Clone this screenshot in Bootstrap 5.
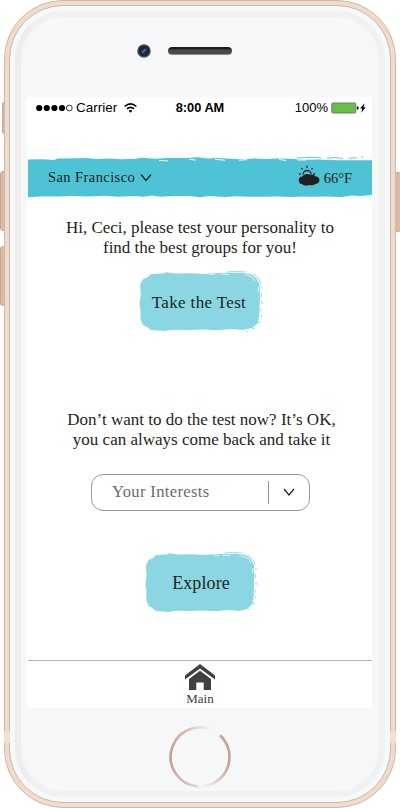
<!DOCTYPE html>
<html lang="en">
<head>
<meta charset="utf-8">
<meta name="viewport" content="width=device-width, initial-scale=1">
<title>Personality groups</title>
<link href="https://cdn.jsdelivr.net/npm/bootstrap@5.3.0/dist/css/bootstrap.min.css" rel="stylesheet">
<style>
body{width:400px;height:808px;overflow:hidden;background:#fff;color:#231f20;font-family:"Liberation Serif",serif}
svg{display:block;flex:none}
.phone{width:392px;height:808px;margin:0 4px;border:1px solid #cdb8ab;border-radius:59px;background:#f1dccb;padding:4px}
.rim{border:1px solid #cdb6a7;border-radius:54px;background:#f6f9fb;padding:5px}
.bezel{border:6px solid #f1f1ef;border-left-color:#efecec;border-radius:48px;background:#f5f7f9;padding:0 6px}
.top-face{height:80px}
.side-key{position:absolute;background:#d8bba9;border:1px solid #c3a797;z-index:-1}
.key-mute{left:2px;top:102px;width:4px;height:32px;border-radius:2px}
.key-up{left:0;top:171px;width:6px;height:60px;border-radius:3px}
.key-down{left:0;top:246px;width:6px;height:60px;border-radius:3px}
.key-power{left:394px;top:172px;width:7px;height:60px;border-radius:3px}
.seam{position:absolute;top:731px;width:6px;height:12px;background:#f3dfcf}
.seam-l{left:4px}.seam-r{left:390px}
.camera{margin:27px 0 0 110px}
.speaker{width:64px;height:8px;margin:30px 0 0 17px;border-radius:4px;background:linear-gradient(#1c1d1e 25%,#48494a 40%);border-bottom:1px solid #8d8e8f}
.display{width:345px;height:611px;background:#fff}
.status{height:22px;padding:0 5px 0 9px;color:#000;font-family:"Liberation Sans",sans-serif;line-height:22px}
.status-l,.status-r{width:130px}
.status-l{margin-right:-3px}
.carrier{font-size:13.5px;margin-left:3px}
.clock{font-size:12.8px;font-weight:700}
.charge{font-size:13px}
.place{position:relative;z-index:0;height:44px;margin-top:35px;padding:0 20px 0 21px}
.brush{position:absolute;left:0;top:0;z-index:-1}
.band{top:1px}
.city{font-size:14.5px;letter-spacing:.42px;line-height:20px;margin-top:1px}
.temp{font-size:14.5px;line-height:20px;margin-top:4px}
.copy{font-size:17px;line-height:20px;white-space:nowrap}
.intro{margin-top:20px;padding-left:1px}
.later{margin-top:77px;padding-left:4px}
.paint-btn,.paint-btn:hover{position:relative;z-index:0;border:0;padding:0;font-size:17px;color:#231f20}
.take{width:124px;height:62px;margin:13px 0 0 112px;padding:1px 4px 0 0;letter-spacing:.35px}
.explore{width:112px;height:62px;margin:41px 0 0 118px;padding:0;font-size:18px;letter-spacing:.1px}
.interest{width:219px;height:37px;margin:24px 0 0 64px;border:1px solid #989899;border-radius:12px;padding:0 14px 0 20px}
.interest-label{font-size:16.5px;letter-spacing:.38px;color:#6c6c6d}
.divider{width:1px;height:23px;background:#929292}
.tabs{height:48px;margin-left:1px;border-top:1px solid #b4b4b4;padding-top:3px;color:#414143}
.tab-text{font-size:13px;line-height:14px;margin-top:2px}
.home{padding-top:17px}
</style>
<script src="https://cdn.jsdelivr.net/npm/bootstrap@5.3.0/dist/js/bootstrap.bundle.min.js"></script>
</head>
<body class="position-relative">
<span class="side-key key-mute"></span><span class="side-key key-up"></span><span class="side-key key-down"></span><span class="side-key key-power"></span>
<div class="phone"><div class="rim h-100"><div class="bezel h-100">
  <div class="top-face d-flex align-items-start">
    <svg class="camera" width="14" height="14" viewBox="0 0 14 14"><circle cx="7" cy="7" r="6.8" fill="#56575a"/><circle cx="7" cy="6.8" r="5.6" fill="#232428"/><circle cx="7" cy="7" r="3.5" fill="#182c53"/><path d="M5.2 8.7 8.7 5.1" stroke="#4269b4" stroke-width="2"/></svg>
    <span class="speaker"></span>
  </div>
  <main class="display d-flex flex-column">
    <div class="status d-flex justify-content-between align-items-center">
      <div class="status-l d-flex align-items-center">
        <svg width="37" height="8" viewBox="0 0 37 8"><g fill="#000"><circle cx="3.2" cy="4" r="3.1"/><circle cx="10.8" cy="4" r="3.1"/><circle cx="18.4" cy="4" r="3.1"/><circle cx="26" cy="4" r="3.1"/></g><circle cx="33.3" cy="4" r="2.9" fill="none" stroke="#000" stroke-width=".8"/></svg>
        <span class="carrier">Carrier</span>
        <svg style="margin-left:7px" width="13" height="10" viewBox="0 0 13 10"><g fill="none" stroke="#000" stroke-width="1.6"><path d="M.6 3.5Q6.5-1.7 12.4 3.5M2.9 5.9q3.6-3 7.2 0"/></g><path d="M4.6 7.7q1.9-1.5 3.8 0L6.5 9.8z"/></svg>
      </div>
      <span class="clock">8:00 AM</span>
      <div class="status-r d-flex justify-content-end align-items-center">
        <span class="charge">100%</span>
        <svg style="margin-left:3px" width="36" height="12" viewBox="0 0 36 12"><rect x=".8" y="1" width="24" height="10" rx="1" fill="#68bf45" stroke="#77777a"/><path d="M25.8 4.2q2 0 2 1.8t-2 1.8z"/><path d="m33.5 1.3-4.4 5.3h2.2l-1 4.1 4.4-5.4h-2.3z"/></svg>
      </div>
    </div>
    <header class="place d-flex justify-content-between align-items-center">
      <svg class="brush band" width="345" height="44" viewBox="0 0 345 44"><path fill="#4ec3d5" d="M1 4.6 14 4.2 20 4.5 27 5 31 3.6 50 3.2 60 2.9 68 3.9 82 3.4 94 4.2 109 3.7 113 2.8 119 3 128 3.7 140 3 160 2.9 171 2.2 181 3.4 192 3.1 207 3.9 218 4.2 227 3.4 239 4.1 248 3.5 265 3.7 276 4.8 292 4.6 301 5 313 5.3 345 5.3V40L333 41 325 40.4 315 42 300 41.4 286 41.8 276 41.4 265 42 250 41.4 234 41.8 220 41.8 209 41.3 198 42 182 41 173 42.2 165 41.2 147 41 133 41.8 125 40.4 117 41.8 107 41.1 91 41.7 77 40.7 61 41.6 46 40.9 31 41.4 13 41.4 1 42.2z"/><g stroke="#fff" stroke-width=".9" fill="none"><path d="m132 5.5 9 .4M162 4.3l7 .8M188 4.4l10 .8M212 5.2l8-.5M252 4.5l7 1M270 5h9"/></g><g stroke="#4ec3d5" stroke-width=".9" fill="none"><path d="m270 3 16-.7 8 .7M300 3.2l8-.6 8 .8M322 3.4l8-.7M334 2.4l2-.5"/></g></svg>
      <div class="d-flex align-items-center"><span class="city">San Francisco</span>
        <svg style="margin:2px 0 0 5px" width="12" height="9" viewBox="0 0 12 9"><path d="m1 1.5 5 6 5-6" fill="none" stroke="#231f20" stroke-width="1.2"/></svg></div>
      <div class="d-flex align-items-center">
        <svg style="margin-right:4px" width="22" height="22" viewBox="0 0 22 22"><g fill="none" stroke="#231f20" stroke-width="1.3"><path d="M5 9.6a4.1 4.1 0 0 1 8.2 0M9 .8v1.9M3.4 3.2l1.2 1.2M13.4 4.4l1.2-1.2M1 9h1.6M15.4 9H17"/></g><path fill="#231f20" d="M4 19C1.9 18.9.7 17.5.7 15.2c0-2.3 1.5-3.7 3.7-3.7 1-1.8 3-2.9 5.5-2.5 1.1.1 2 .5 2.6 1 2-.8 4.2-.2 5.1 1.4 2.3-.1 3.9 1.5 3.9 3.7 0 2.5-1.6 3.9-4 3.8-1.7 1.4-4.1 1.6-5.8 1-2.6 1.1-5.9.8-7.7-.9z"/></svg>
        <span class="temp">66°F</span></div>
    </header>
    <p class="copy intro text-center mb-0">Hi, Ceci, please test your personality to<br>find the best groups for you!</p>
    <button class="btn paint-btn take" type="button">
      <svg class="brush" width="124" height="62" viewBox="0 0 124 62"><path id="paint" fill="#8ad7e3" d="M1 14 4 8 9 6 12 3 24 2.4 27 1.3 36 2.6 53 2.3 64 3 76 2.2 89 1.8 101 1.7 112 3 117 7 120.6 13 121 25 120.3 44 119 52 113 57 104 59 92 58 78 59.3 65 58.6 50 59 34 58.7 25 60 12 59 8 56 4 54 1.4 48 1.6 40 .5 33 1.8 24z"/><path d="m70 3 6 .6M82 3l8 .6M106 3.5l7 2.5 3 4M119.5 16l-.5 5" stroke="#fff" stroke-width=".7" fill="none"/><path d="m88 1 9-.6 10 .6M114 3l6 5 2 5M123 16v2M122.5 22v4M123 30v3M121.8 37v4M122.5 44v2M121 50l-1 3M116 57l-3 1M107 60l2 .7" fill="none" stroke="#8ad7e3" stroke-width=".9"/></svg>Take the Test</button>
    <p class="copy later text-center mb-0">Don’t want to do the test now? It’s OK,<br>you can always come back and take it</p>
    <div class="interest d-flex align-items-center"><span class="interest-label me-auto">Your Interests</span><span class="divider"></span>
      <svg style="margin-left:14px" width="12" height="9" viewBox="0 0 12 9"><path d="m1 1 5 6 5-6" fill="none" stroke="#231f20" stroke-width="1.2"/></svg></div>
    <button class="btn paint-btn explore" type="button">
      <svg class="brush" width="112" height="62" viewBox="0 0 124 62" preserveAspectRatio="none"><use href="#paint"/><path d="m76 3 6 .6M86 3l8 .6M106 3.5l8 3 3 4M119.5 16l-.5 5" stroke="#fff" stroke-width=".8" fill="none"/><path d="m88 1 9-.6 10 .6M114 3l6 5 2 5M123 16v2M122.5 22v4M123 30v3M121.8 37v4M122.5 44v2M121 50l-1 3M116 57l-3 1" fill="none" stroke="#8ad7e3" stroke-width=".9"/></svg>Explore</button>
    <nav class="tabs d-flex flex-column align-items-center mt-auto">
      <svg width="30" height="26" viewBox="0 0 30 26"><g fill="#414143"><path d="M0 11.5 15 0l15 11.5v4L15 4.5 0 15.5z"/><path d="M4 15 15 6.8 26 15v11h-7.3v-7.5h-7.4V26H4z"/></g></svg>
      <span class="tab-text">Main</span>
    </nav>
  </main>
  <div class="home d-flex justify-content-center">
    <svg width="64" height="64" viewBox="0 0 64 64"><defs><linearGradient id="ringA" x1="0" x2="1"><stop offset="0" stop-color="#c6a292"/><stop offset=".4" stop-color="#dac6bf"/><stop offset=".85" stop-color="#f5f7f9"/></linearGradient><linearGradient id="ringB" x1="1" y1="0" x2="0" y2="1"><stop offset=".3" stop-color="#c6a58f"/><stop offset=".9" stop-color="#f3f1f0"/></linearGradient></defs><g fill="none" stroke-width="2.6"><path d="M30 61.4A29.5 29.5 0 1 1 50 8.5" stroke="url(#ringA)"/><path d="M52 10.3A29.5 29.5 0 0 1 30 61.4" stroke="url(#ringB)"/></g></svg>
  </div>
</div></div></div>
<span class="seam seam-l"></span><span class="seam seam-r"></span>
</body>
</html>
